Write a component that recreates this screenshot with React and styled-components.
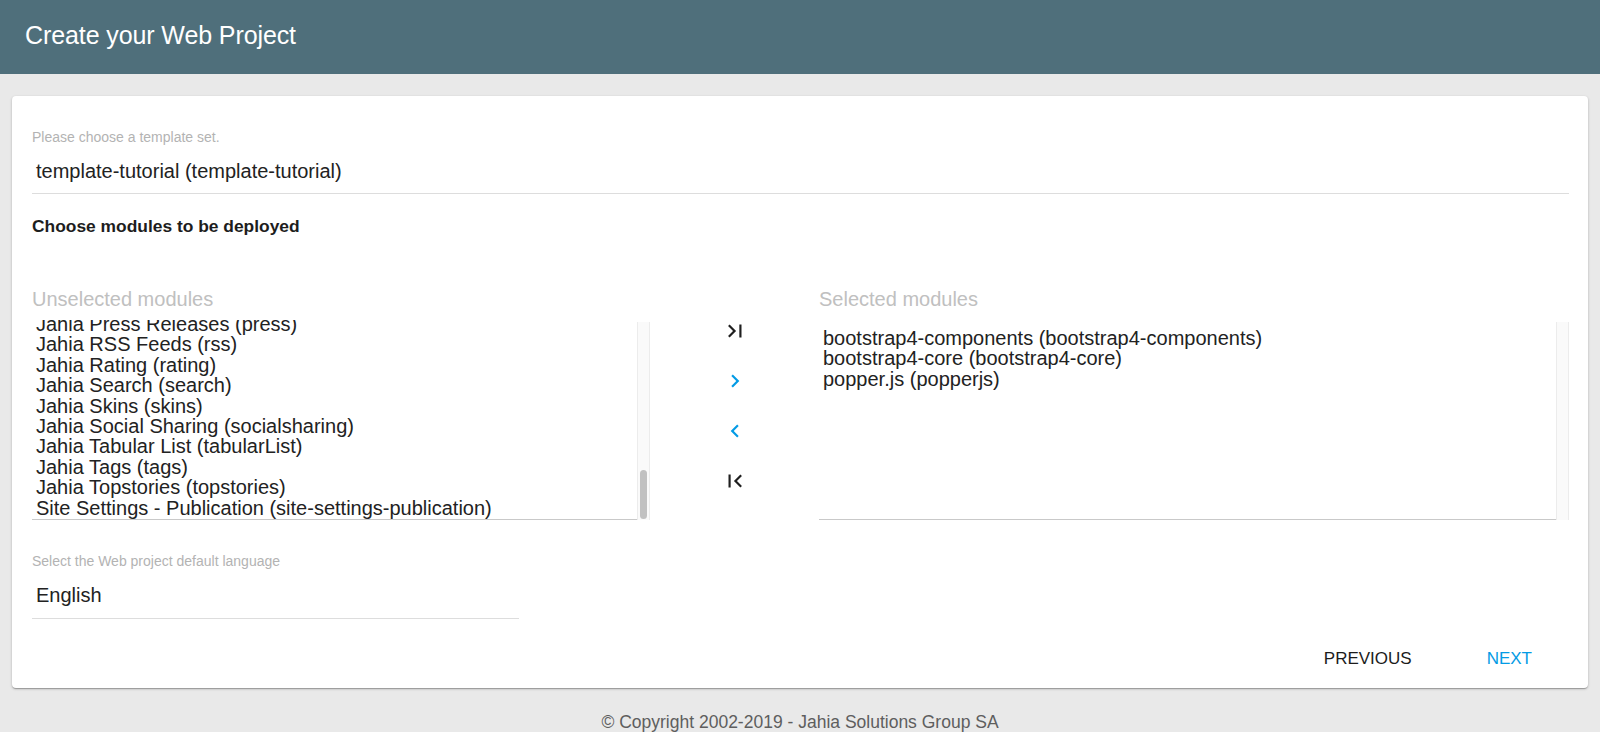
import React from "react";
import styled, { createGlobalStyle } from "styled-components";

const GlobalStyle = createGlobalStyle`
  html, body {
    margin: 0;
    padding: 0;
    background: #e9e9e9;
    font-family: "Liberation Sans", Arial, Helvetica, sans-serif;
    overflow: hidden;
  }
  * { box-sizing: border-box; }
`;

const ROW = 20.4;
const VIEW = 200;

const Page = styled.div`
  min-height: 732px;
  display: flex;
  flex-direction: column;
`;

const Header = styled.header`
  height: 74px;
  background: #4f6f7b;
  display: flex;
  align-items: center;
  padding: 0 0 4px 25px;
`;

const Title = styled.h1`
  margin: 0;
  font-size: 25px;
  font-weight: 400;
  color: #ffffff;
  letter-spacing: -0.1px;
`;

const Card = styled.main`
  margin: 22px 12px 0;
  height: 592px;
  background: #ffffff;
  border-radius: 4px;
  box-shadow: 0 1px 3px rgba(0, 0, 0, 0.2), 0 1px 1px rgba(0, 0, 0, 0.14),
    0 2px 1px -1px rgba(0, 0, 0, 0.12);
  padding: 33px 19px 11px 20px;
  display: flex;
  flex-direction: column;
`;

const Field = styled.div`
  display: flex;
  flex-direction: column;
  width: ${(p) => p.$width || "100%"};
  margin-top: ${(p) => p.$top || "0px"};
`;

const FieldLabel = styled.label`
  font-size: 14px;
  line-height: 17px;
  color: #b3b3b3;
`;

const FieldValue = styled.div`
  margin-top: 13px;
  padding: 0 0 ${(p) => p.$bottom || "10px"} 4px;
  font-size: 20px;
  line-height: 24px;
  color: #222;
  border-bottom: 1px solid #dddddd;
`;

const SectionTitle = styled.h2`
  margin: 22px 0 0;
  font-size: 17.4px;
  line-height: 20px;
  font-weight: 700;
  color: #1d1d1d;
`;

const ModulesGrid = styled.section`
  margin-top: 51px;
  display: grid;
  grid-template-columns: 618px 169px 1fr;
`;

const ModulePane = styled.div`
  display: flex;
  flex-direction: column;
  gap: 9px;
`;

const PaneTitle = styled.div`
  font-size: 20px;
  line-height: 24px;
  color: #c0c0c0;
`;

const ListFrame = styled.div`
  height: ${VIEW}px;
  display: flex;
`;

const ListViewport = styled.div`
  flex: 1;
  min-width: 0;
  overflow: hidden;
  display: flex;
  flex-direction: column;
  justify-content: ${(p) => (p.$atEnd ? "flex-end" : "flex-start")};
  border-bottom: 1px solid #c9c9c9;
`;

const ModuleList = styled.ul`
  list-style: none;
  margin: 0;
  padding: ${(p) => (p.$atEnd ? "0 0 1px 4px" : "8px 0 1px 4px")};
  flex: none;
`;

const ModuleItem = styled.li`
  font-size: 20px;
  line-height: ${ROW}px;
  color: #222;
  white-space: nowrap;
`;

const ScrollTrack = styled.div`
  width: 13px;
  margin-top: 2px;
  background: #fafafa;
  border-left: 1px solid #ececec;
  border-right: 1px solid #ececec;
  padding: 0 2px 1px;
  display: flex;
  flex-direction: column;
  justify-content: flex-end;
`;

const ScrollThumb = styled.div`
  width: 7px;
  border-radius: 4px;
  background: #c1c1c1;
`;

const TransferColumn = styled.div`
  display: flex;
  flex-direction: column;
  align-items: center;
  padding-top: 19px;
`;

const TransferButton = styled.button`
  width: 50px;
  height: 50px;
  border: 0;
  background: transparent;
  padding: 0;
  display: flex;
  align-items: center;
  justify-content: center;
  color: ${(p) => (p.$accent ? "#039be5" : "#1f1f1f")};
  cursor: pointer;
  svg {
    width: 26px;
    height: 26px;
    fill: currentColor;
  }
`;

const Actions = styled.div`
  margin-top: 22px;
  margin-right: 21px;
  display: flex;
  justify-content: flex-end;
  gap: 43px;
`;

const ActionButton = styled.button`
  border: 0;
  background: transparent;
  font-family: inherit;
  font-size: 17px;
  line-height: 20px;
  padding: 8px 16px;
  text-transform: uppercase;
  color: ${(p) => (p.$primary ? "#039be5" : "#1c1c1c")};
  cursor: pointer;
`;

const Footer = styled.footer`
  margin-top: 24px;
  text-align: center;
  font-size: 17.5px;
  line-height: 20px;
  color: #5e5e5e;
`;

const unselectedModules = [
  "Bootstrap 3 - Components (bootstrap3-components)",
  "Bootstrap 3 - Core (bootstrap3-core)",
  "Font Awesome (font-awesome)",
  "Jahia Areas (areas)",
  "Jahia Blog (blog)",
  "Jahia Bookmarks (bookmarks)",
  "Jahia Calendar (calendar)",
  "Jahia Comments (comments)",
  "Jahia Content Retrieval (contentretrieval)",
  "Jahia Default Skins (default-skins)",
  "Jahia Event (event)",
  "Jahia FAQ (faq)",
  "Jahia Forum (forum)",
  "Jahia Gallery (gallery)",
  "Jahia Google Analytics (google-analytics)",
  "Jahia Ideas (ideas)",
  "Jahia Job (job)",
  "Jahia Location (location)",
  "Jahia Macros (macros)",
  "Jahia Member Profile (member-profile)",
  "Jahia Metrics (metrics)",
  "Jahia Navigation Menu (navmenu)",
  "Jahia News (news)",
  "Jahia Newsletter (newsletter)",
  "Jahia Person (person)",
  "Jahia Poll (poll)",
  "Jahia Portal (portal)",
  "Jahia Press (press-base)",
  "Jahia Press Kit (presskit)",
  "Jahia Press Releases (press)",
  "Jahia RSS Feeds (rss)",
  "Jahia Rating (rating)",
  "Jahia Search (search)",
  "Jahia Skins (skins)",
  "Jahia Social Sharing (socialsharing)",
  "Jahia Tabular List (tabularList)",
  "Jahia Tags (tags)",
  "Jahia Topstories (topstories)",
  "Site Settings - Publication (site-settings-publication)",
];

const selectedModules = [
  "bootstrap4-components (bootstrap4-components)",
  "bootstrap4-core (bootstrap4-core)",
  "popper.js (popperjs)",
];

const LastPage = () => (
  <svg viewBox="0 0 24 24">
    <path d="M5.59 7.41L10.18 12l-4.59 4.59L7 18l6-6-6-6zM16 6h2v12h-2z" />
  </svg>
);
const ChevronRight = () => (
  <svg viewBox="0 0 24 24">
    <path d="M10 6L8.59 7.41 13.17 12l-4.58 4.59L10 18l6-6z" />
  </svg>
);
const ChevronLeft = () => (
  <svg viewBox="0 0 24 24">
    <path d="M15.41 7.41L14 6l-6 6 6 6 1.41-1.41L10.83 12z" />
  </svg>
);
const FirstPage = () => (
  <svg viewBox="0 0 24 24">
    <path d="M18.41 16.59L13.82 12l4.59-4.59L17 6l-6 6 6 6zM6 6h2v12H6z" />
  </svg>
);

/* A list box scrolled to its end shows only its last rows (windowed);
   the thumb size comes from the full item count. */
function ModuleBox({ items, atEnd }) {
  const contentHeight = items.length * ROW + 9;
  const overflowing = contentHeight > VIEW;
  const rowsShown = Math.ceil(VIEW / ROW);
  const shown = atEnd && overflowing ? items.slice(-rowsShown) : items;
  const thumb = overflowing ? Math.round(((VIEW - 3) * VIEW) / contentHeight) : 0;

  return (
    <ListFrame>
      <ListViewport $atEnd={atEnd && overflowing}>
        <ModuleList $atEnd={atEnd && overflowing}>
          {shown.map((m) => (
            <ModuleItem key={m}>{m}</ModuleItem>
          ))}
        </ModuleList>
      </ListViewport>
      <ScrollTrack>{thumb > 0 && <ScrollThumb style={{ height: thumb }} />}</ScrollTrack>
    </ListFrame>
  );
}

export default function App() {
  return (
    <>
      <GlobalStyle />
      <Page>
        <Header>
          <Title>Create your Web Project</Title>
        </Header>
        <Card>
          <Field>
            <FieldLabel>Please choose a template set.</FieldLabel>
            <FieldValue>template-tutorial (template-tutorial)</FieldValue>
          </Field>
          <SectionTitle>Choose modules to be deployed</SectionTitle>
          <ModulesGrid>
            <ModulePane>
              <PaneTitle>Unselected modules</PaneTitle>
              <ModuleBox items={unselectedModules} atEnd />
            </ModulePane>
            <TransferColumn>
              <TransferButton aria-label="Add all">
                <LastPage />
              </TransferButton>
              <TransferButton $accent aria-label="Add">
                <ChevronRight />
              </TransferButton>
              <TransferButton $accent aria-label="Remove">
                <ChevronLeft />
              </TransferButton>
              <TransferButton aria-label="Remove all">
                <FirstPage />
              </TransferButton>
            </TransferColumn>
            <ModulePane>
              <PaneTitle>Selected modules</PaneTitle>
              <ModuleBox items={selectedModules} />
            </ModulePane>
          </ModulesGrid>
          <Field $width="487px" $top="33px">
            <FieldLabel>Select the Web project default language</FieldLabel>
            <FieldValue $bottom="11px">English</FieldValue>
          </Field>
          <Actions>
            <ActionButton>Previous</ActionButton>
            <ActionButton $primary>Next</ActionButton>
          </Actions>
        </Card>
        <Footer>© Copyright 2002-2019 - Jahia Solutions Group SA</Footer>
      </Page>
    </>
  );
}
